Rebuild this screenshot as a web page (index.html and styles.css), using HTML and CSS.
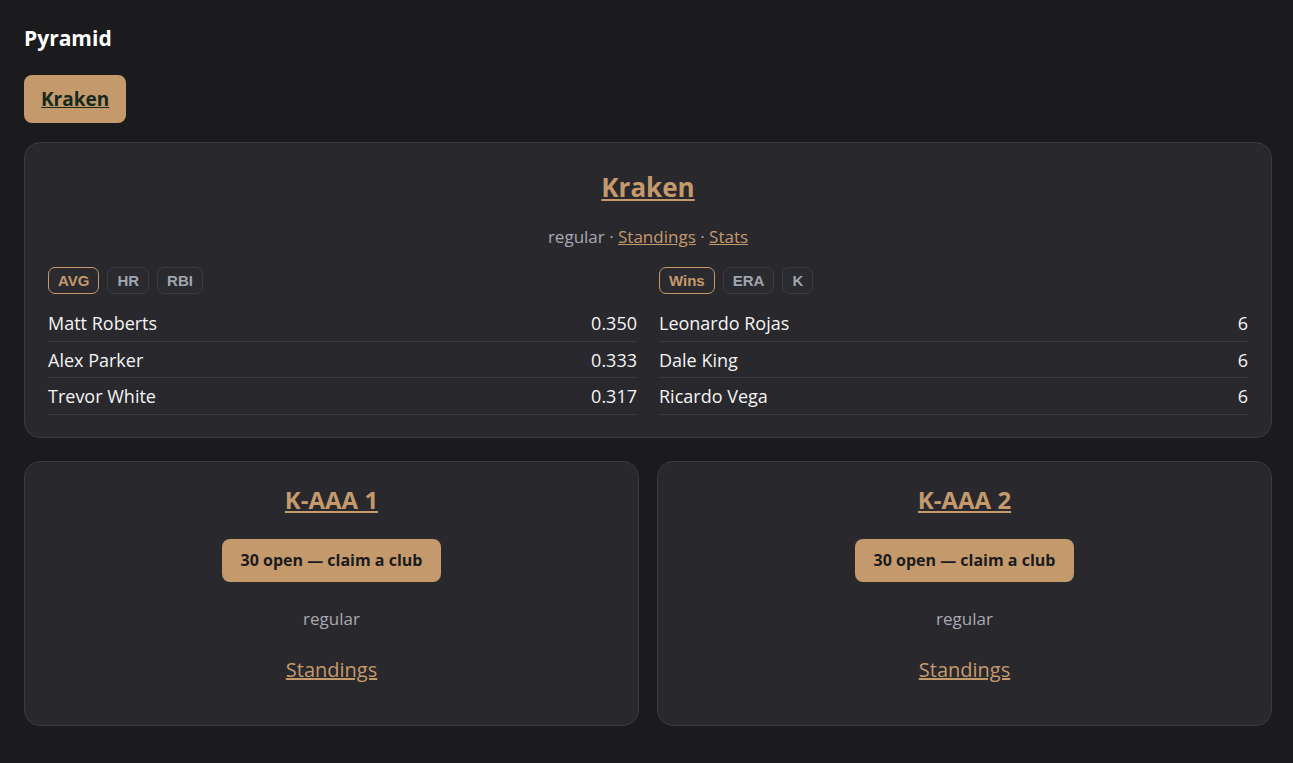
FILE: index.html
```html
<!DOCTYPE html>
<html lang="en">
  <head>
    <meta charset="UTF-8" />
    <meta name="viewport" content="width=device-width, initial-scale=1.0" />
    <title>Pyramid</title>
    <link rel="stylesheet" href="styles.css">
  </head>
  <body>
    <h1 class="page-title">Pyramid</h1>

    <nav class="org-tabs">
      <a href="#" class="org-tab">Kraken</a>
    </nav>

    <!-- Top level of the pyramid -->
    <section class="card top-card">
      <h2 class="card-title"><a href="#">Kraken</a></h2>
      <p class="card-meta">
        regular · <a href="#">Standings</a> · <a href="#">Stats</a>
      </p>

      <div class="leaders">
        <div class="leader-col">
          <div class="chips">
            <button class="chip active">AVG</button>
            <button class="chip">HR</button>
            <button class="chip">RBI</button>
          </div>
          <ul class="leader-list">
            <li><span>Matt Roberts</span><span>0.350</span></li>
            <li><span>Alex Parker</span><span>0.333</span></li>
            <li><span>Trevor White</span><span>0.317</span></li>
          </ul>
        </div>

        <div class="leader-col">
          <div class="chips">
            <button class="chip active">Wins</button>
            <button class="chip">ERA</button>
            <button class="chip">K</button>
          </div>
          <ul class="leader-list">
            <li><span>Leonardo Rojas</span><span>6</span></li>
            <li><span>Dale King</span><span>6</span></li>
            <li><span>Ricardo Vega</span><span>6</span></li>
          </ul>
        </div>
      </div>
    </section>

    <!-- Affiliates -->
    <div class="affiliates">
      <section class="card sub-card">
        <h3 class="sub-title"><a href="#">K-AAA 1</a></h3>
        <button class="claim">30 open — claim a club</button>
        <p class="sub-meta">regular</p>
        <a href="#" class="sub-link">Standings</a>
      </section>

      <section class="card sub-card">
        <h3 class="sub-title"><a href="#">K-AAA 2</a></h3>
        <button class="claim">30 open — claim a club</button>
        <p class="sub-meta">regular</p>
        <a href="#" class="sub-link">Standings</a>
      </section>
    </div>
  </body>
</html>
```

FILE: styles.css
```css
body {
  margin: 0;
  padding: 24px 21px 0 24px;
  background: #1b1b1e;
  color: #f2f2f2;
  font-family: "Open Sans", "Noto Sans", sans-serif;
}

a {
  color: #c49a6c;
}

.page-title {
  margin: 0;
  font-size: 21px;
  line-height: 28px;
  font-weight: 700;
  color: #ffffff;
}

.org-tabs {
  margin-top: 23px;
  display: flex;
}

.org-tab {
  display: inline-block;
  padding: 0 17px;
  height: 48px;
  line-height: 48px;
  background: #c49a6c;
  color: #15291d;
  border-radius: 8px;
  font-size: 19px;
  font-weight: 700;
}

.card {
  background: #29282d;
  border: 1px solid #3b3a40;
  border-radius: 16px;
  box-sizing: border-box;
}

.top-card {
  margin-top: 19px;
  padding: 24px 23px 22px;
  text-align: center;
}

.card-title {
  margin: 0;
  font-size: 26px;
  line-height: 40px;
  font-weight: 700;
}

.card-meta {
  margin: 18px 0 0;
  font-size: 17px;
  line-height: 24px;
  color: #a9a9b1;
}

.leaders {
  margin-top: 18px;
  display: grid;
  grid-template-columns: 1fr 1fr;
  gap: 22px;
  text-align: left;
}

.chips {
  display: flex;
  gap: 8px;
}

.chip {
  height: 27px;
  padding: 0 9px;
  background: #2b2a2f;
  border: 1px solid #3b3a40;
  border-radius: 7px;
  color: #a0a6ae;
  font-family: "Liberation Sans", Arial, sans-serif;
  font-size: 15px;
  font-weight: 700;
}

.chip.active {
  border-color: #c49a6c;
  color: #c49a6c;
}

.leader-list {
  list-style: none;
  margin: 11px 0 0;
  padding: 0;
}

.leader-list li {
  display: flex;
  justify-content: space-between;
  height: 36.5px;
  line-height: 36px;
  border-bottom: 1px solid #3b3a40;
  box-sizing: border-box;
  font-size: 18px;
  color: #f4f4f4;
}

.affiliates {
  margin-top: 23px;
  display: grid;
  grid-template-columns: 1fr 1fr;
  gap: 18px;
}

.sub-card {
  height: 265px;
  padding-top: 21px;
  display: flex;
  flex-direction: column;
  align-items: center;
}

.sub-title {
  margin: 0;
  font-size: 24px;
  line-height: 34px;
  font-weight: 700;
}

.claim {
  margin-top: 22px;
  height: 43px;
  padding: 0 19px;
  background: #c49a6c;
  border: none;
  border-radius: 8px;
  color: #1b1b1e;
  font-family: "Open Sans", "Noto Sans", sans-serif;
  font-size: 16px;
  font-weight: 700;
}

.sub-meta {
  margin: 25px 0 0;
  font-size: 17px;
  line-height: 24px;
  color: #a9a9b1;
}

.sub-link {
  margin-top: 25px;
  font-size: 20px;
  line-height: 28px;
}
```
